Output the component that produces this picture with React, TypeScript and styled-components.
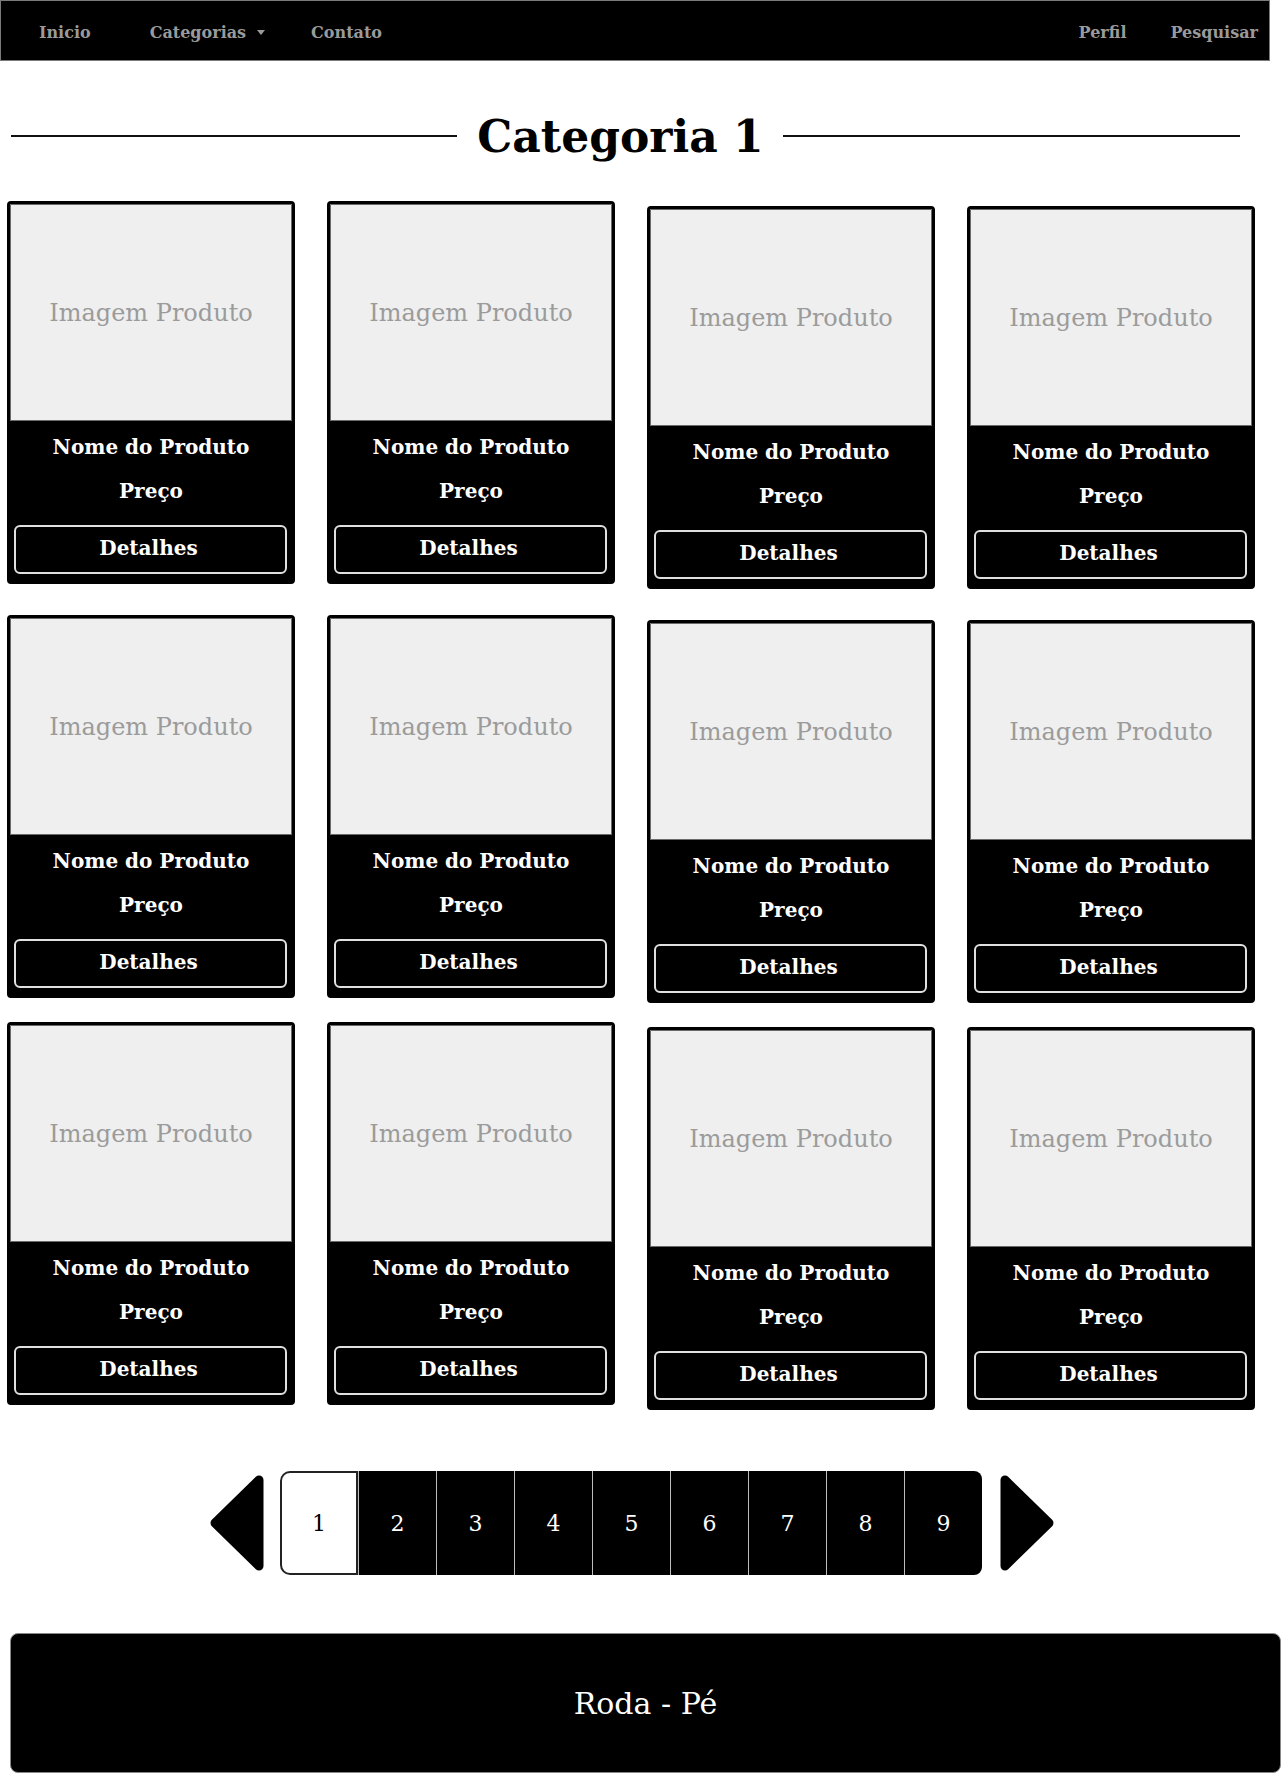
import styled, { createGlobalStyle } from 'styled-components';

const GlobalStyle = createGlobalStyle`
  body {
    margin: 0;
    background: #fff;
    font-family: "DejaVu Serif", "Liberation Serif", serif;
  }
`;

const NavBar = styled.nav`
  display: flex;
  align-items: center;
  box-sizing: border-box;
  width: 1270px;
  height: 61px;
  padding: 3px 11px 0 38px;
  background: #000;
  border: 1px solid #7a7a7a;
`;

const NavLink = styled.a<{ $gap?: number }>`
  display: flex;
  align-items: center;
  margin-left: ${props => props.$gap || 0}px;
  color: #9a9a9a;
  font-size: 16px;
  font-weight: bold;
  text-decoration: none;
`;

const Caret = styled.span`
  display: inline-block;
  margin-left: 11px;
  border-top: 5px solid #9a9a9a;
  border-left: 4px solid transparent;
  border-right: 4px solid transparent;
`;

const Spacer = styled.div`
  flex: 1;
`;

const TitleRow = styled.div`
  display: flex;
  align-items: center;
  width: 1229px;
  height: 68px;
  margin: 41px 0 0 11px;
`;

const Rule = styled.div<{ $extra?: number }>`
  flex: 1 1 ${props => props.$extra || 0}px;
  height: 2px;
  background: #111;
`;

const Title = styled.h1`
  margin: 0 19px 0 20px;
  font-size: 44px;
  font-weight: bold;
  color: #000;
`;

const Products = styled.div`
  display: flex;
  flex-direction: column;
  margin: 31px 0 0 7px;
`;

const Row = styled.div<{ $top: number }>`
  display: flex;
  align-items: flex-start;
  gap: 32px;
  margin-top: ${props => props.$top}px;
`;

const Card = styled.div<{ $shift: boolean }>`
  display: flex;
  flex-direction: column;
  box-sizing: border-box;
  width: 288px;
  height: 383px;
  margin-top: ${props => (props.$shift ? 5 : 0)}px;
  background: #000;
  border: 3px solid #000;
  border-radius: 4px;
  overflow: hidden;
`;

const ImageBox = styled.div`
  display: flex;
  align-items: center;
  justify-content: center;
  box-sizing: border-box;
  height: 217px;
  background: #efefef;
  border: 1px solid #6a6a6a;
  color: #9b9b9b;
  font-size: 24px;
`;

const CardBody = styled.div`
  display: flex;
  flex-direction: column;
  padding: 4px 0 0;
  color: #fff;
  text-align: center;
`;

const CardLine = styled.div`
  height: 44px;
  line-height: 44px;
  font-size: 20px;
  font-weight: bold;
`;

const DetailsButton = styled.button`
  box-sizing: border-box;
  height: 49px;
  margin: 12px 5px 0 4px;
  padding: 0 4px 4px 0;
  background: #000;
  border: 2px solid #e0e0e0;
  border-radius: 6px;
  color: #fff;
  font-family: inherit;
  font-size: 20px;
  font-weight: bold;
  cursor: pointer;
`;

const Pagination = styled.div`
  display: flex;
  align-items: center;
  margin: 61px 0 0 210px;
`;

const Arrow = styled.svg<{ $gap: number }>`
  display: block;
  margin: 0 ${props => props.$gap}px;
  &:first-child {
    margin-left: 0;
  }
`;

const Pages = styled.div`
  display: flex;
  height: 104px;
`;

const Page = styled.div<{ $active?: boolean }>`
  display: flex;
  align-items: center;
  justify-content: center;
  box-sizing: border-box;
  width: 78px;
  height: 104px;
  background: ${props => (props.$active ? '#fff' : '#000')};
  color: ${props => (props.$active ? '#000' : '#fff')};
  border: ${props => (props.$active ? '2px solid #222' : 'none')};
  border-left: ${props => (props.$active ? '2px solid #222' : '1px solid #bdbdbd')};
  border-radius: ${props => (props.$active ? '10px 0 0 10px' : '0')};
  font-size: 22px;
  &:last-child {
    border-radius: 0 8px 8px 0;
  }
`;

const Footer = styled.footer`
  display: flex;
  align-items: center;
  justify-content: center;
  box-sizing: border-box;
  width: 1271px;
  height: 140px;
  margin: 58px 0 0 10px;
  background: #000;
  border: 1px solid #888;
  border-radius: 8px;
  color: #fff;
  font-size: 30px;
`;

const rows = [
  { id: 1, top: 0 },
  { id: 2, top: 26 },
  { id: 3, top: 19 },
];
const columns = [0, 1, 2, 3];
const pages = [1, 2, 3, 4, 5, 6, 7, 8, 9];

export default function App() {
  return (
    <>
      <GlobalStyle />
      <NavBar>
        <NavLink>Inicio</NavLink>
        <NavLink $gap={59}>
          Categorias
          <Caret />
        </NavLink>
        <NavLink $gap={46}>Contato</NavLink>
        <Spacer />
        <NavLink>Perfil</NavLink>
        <NavLink $gap={44}>Pesquisar</NavLink>
      </NavBar>

      <TitleRow>
        <Rule />
        <Title>Categoria 1</Title>
        <Rule $extra={11} />
      </TitleRow>

      <Products>
        {rows.map(row => (
          <Row key={row.id} $top={row.top}>
            {columns.map(c => (
              <Card key={c} $shift={c >= 2}>
                <ImageBox>Imagem Produto</ImageBox>
                <CardBody>
                  <CardLine>Nome do Produto</CardLine>
                  <CardLine>Preço</CardLine>
                  <DetailsButton>Detalhes</DetailsButton>
                </CardBody>
              </Card>
            ))}
          </Row>
        ))}
      </Products>

      <Pagination>
        <Arrow $gap={16} width="54" height="96" viewBox="0 0 54 96">
          <polygon
            points="49,5 49,91 5,48"
            fill="#000"
            stroke="#000"
            strokeWidth="9"
            strokeLinejoin="round"
          />
        </Arrow>
        <Pages>
          {pages.map(n => (
            <Page key={n} $active={n === 1}>
              {n}
            </Page>
          ))}
        </Pages>
        <Arrow $gap={18} width="54" height="96" viewBox="0 0 54 96">
          <polygon
            points="5,5 5,91 49,48"
            fill="#000"
            stroke="#000"
            strokeWidth="9"
            strokeLinejoin="round"
          />
        </Arrow>
      </Pagination>

      <Footer>Roda - Pé</Footer>
    </>
  );
}
